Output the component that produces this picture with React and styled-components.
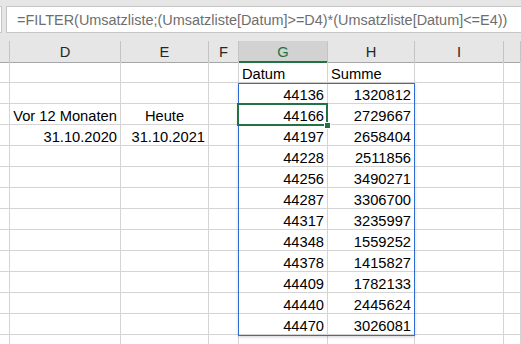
import React from "react";
import styled, { createGlobalStyle } from "styled-components";

const Global = createGlobalStyle`
  html, body { margin: 0; padding: 0; background: #fff; overflow: hidden; }
  body { font-family: "Liberation Sans", Arial, sans-serif; }
`;

const COLS = [10, 111, 88, 30, 89, 87, 89];
const HEADERS = ["", "D", "E", "F", "G", "H", "I", ""];
const ROW_H = 21;
const HEAD_TOP = 41;
const HEAD_H = 22;

const Page = styled.div`
  width: 521px;
  height: 344px;
  overflow: hidden;
  background: #e6e6e6;
  display: flex;
  flex-direction: column;
`;

const FormulaBar = styled.div`
  flex-shrink: 0;
  height: ${HEAD_TOP}px;
  display: flex;
  align-items: flex-start;
  padding-top: 6px;
  box-sizing: border-box;
  gap: 4px;
`;

const NameEdge = styled.div`
  width: 2px;
  height: 27px;
  background: #fff;
  border: 1px solid #c6c6c6;
  border-left: none;
  box-sizing: border-box;
`;

const FormulaBox = styled.div`
  flex: 1;
  height: 27px;
  background: #fff;
  border: 1px solid #c6c6c6;
  border-right: none;
  box-sizing: border-box;
  display: flex;
  align-items: center;
  padding-left: 10px;
  font-size: 14.45px;
  color: #6e6e6e;
  white-space: nowrap;
  overflow: hidden;
`;

const Sheet = styled.div`
  position: relative;
  flex-shrink: 0;
  display: grid;
  grid-template-columns: ${COLS.map((c) => c + "px").join(" ")} 1fr;
  grid-auto-rows: ${ROW_H}px;
  background: #fff;
  align-content: start;
`;

const Head = styled.div`
  height: ${HEAD_H}px;
  box-sizing: border-box;
  background: ${(p) => (p.$active ? "#d2d2d2" : "#e6e6e6")};
  border-right: 1px solid #c4c4c4;
  border-bottom: ${(p) => (p.$active ? "2px solid #217346" : "1px solid #a6a6a6")};
  color: ${(p) => (p.$active ? "#217346" : "#262626")};
  font-size: 14.7px;
  display: flex;
  align-items: center;
  justify-content: center;
  padding-top: ${(p) => (p.$active ? "2px" : "1px")};
`;

const Cell = styled.div`
  box-sizing: border-box;
  border-right: 1px solid #d4d4d4;
  border-bottom: 1px solid #d4d4d4;
  font-size: 14.7px;
  color: #000;
  display: flex;
  align-items: flex-end;
  justify-content: ${(p) =>
    p.$align === "right" ? "flex-end" : p.$align === "center" ? "center" : "flex-start"};
  padding: 0 3px 0 3px;
  white-space: nowrap;
  overflow: visible;
  line-height: 15px;
`;

const RangeBox = styled.div`
  position: absolute;
  border: 1px solid #2f6bd1;
  box-sizing: border-box;
  box-shadow: 0 1px 3px rgba(0, 0, 0, 0.18);
  pointer-events: none;
`;

const SelBox = styled.div`
  position: absolute;
  border: 2px solid #217346;
  box-sizing: border-box;
  pointer-events: none;
`;

const Handle = styled.div`
  position: absolute;
  right: -5px;
  bottom: -5px;
  width: 7px;
  height: 7px;
  background: #217346;
  border: 1px solid #fff;
  box-sizing: border-box;
`;

const data = [
  [44136, 1320812],
  [44166, 2729667],
  [44197, 2658404],
  [44228, 2511856],
  [44256, 3490271],
  [44287, 3306700],
  [44317, 3235997],
  [44348, 1559252],
  [44378, 1415827],
  [44409, 1782133],
  [44440, 2445624],
  [44470, 3026081],
];

function buildRows() {
  const rows = [];
  rows.push(["", "", "", "", { t: "Datum" }, { t: "Summe" }, "", ""]);
  for (let i = 0; i < 14; i++) {
    const r = ["", "", "", "", "", "", "", ""];
    if (i < data.length) {
      r[4] = { t: String(data[i][0]), a: "right" };
      r[5] = { t: String(data[i][1]), a: "right" };
    }
    if (i === 1) {
      r[1] = { t: "Vor 12 Monaten", a: "center" };
      r[2] = { t: "Heute", a: "center" };
    }
    if (i === 2) {
      r[1] = { t: "31.10.2020", a: "right" };
      r[2] = { t: "31.10.2021", a: "right" };
    }
    rows.push(r);
  }
  return rows;
}

const colLeft = (i) => COLS.slice(0, i).reduce((a, b) => a + b, 0);

export default function App() {
  const rows = buildRows();
  const gLeft = colLeft(4) - 1;
  const hRight = colLeft(6) - 1;
  const rowTop = (r) => HEAD_H + r * ROW_H - 1;
  return (
    <>
      <Global />
      <Page>
        <FormulaBar>
          <NameEdge />
          <FormulaBox>
            =FILTER(Umsatzliste;(Umsatzliste[Datum]&gt;=D4)*(Umsatzliste[Datum]&lt;=E4))
          </FormulaBox>
        </FormulaBar>
        <Sheet>
          {HEADERS.map((h, i) => (
            <Head key={"h" + i} $active={h === "G"}>
              {h}
            </Head>
          ))}
          {rows.map((r, ri) =>
            r.map((c, ci) => (
              <Cell key={ri + "-" + ci} $align={c && c.a}>
                {c ? c.t : ""}
              </Cell>
            ))
          )}
          <RangeBox
            style={{
              left: gLeft,
              top: rowTop(1),
              width: hRight - gLeft + 1,
              height: 12 * ROW_H + 1,
            }}
          />
          <SelBox
            style={{
              left: gLeft - 1,
              top: rowTop(2) - 1,
              width: COLS[4] + 2,
              height: ROW_H + 2,
            }}
          >
            <Handle />
          </SelBox>
        </Sheet>
      </Page>
    </>
  );
}
